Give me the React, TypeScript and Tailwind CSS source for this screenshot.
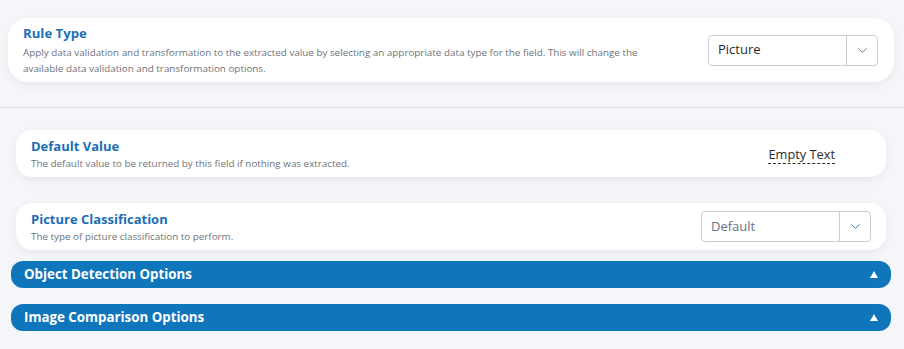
import { ChevronDown } from 'lucide-react';

const font = { fontFamily: '"Open Sans", "Noto Sans", sans-serif' };

function Select({ value, muted }: { value: string; muted?: boolean }) {
  return (
    <div className="flex h-[31px] w-[170px] items-stretch rounded-[4px] border border-[#c9ced6] bg-white">
      <div className={`flex flex-1 items-center pl-[9px] text-[13px] ${muted ? 'text-[#6b7280]' : 'text-[#2b2b2b]'}`}>
        {value}
      </div>
      <div className="flex w-[31px] items-center justify-center border-l border-[#c9ced6]">
        <ChevronDown size={15} strokeWidth={1.5} className={muted ? 'text-[#2f74bd]' : 'text-[#6b7280]'} />
      </div>
    </div>
  );
}

function Bar({ title }: { title: string }) {
  return (
    <div className="ml-[11px] mr-[13px] flex h-[27px] items-center justify-between rounded-[12px] bg-[#0f76bc] pl-[13px] pr-[13px]">
      <span className="text-[13.3px] font-bold text-white">{title}</span>
      <span className="h-0 w-0 border-x-[4px] border-b-[7px] border-x-transparent border-b-white" />
    </div>
  );
}

export default function App() {
  return (
    <div className="min-h-[349px] w-[904px] bg-[#f5f6fa] pt-[18px]" style={font}>
      {/* rule type */}
      <div className="ml-[8px] mr-[10px] flex h-[64px] items-center justify-between rounded-[20px] bg-white pl-[15px] pr-[16px] shadow-[0_3px_10px_rgba(0,0,0,0.06)]">
        <div className="pt-[1px]">
          <h2 className="text-[13.2px] leading-[17px] font-bold text-[#1c6fb5]">Rule Type</h2>
          <p className="mt-[2px] w-[630px] text-[9.85px] leading-[16px] text-[#6e737a]">
            Apply data validation and transformation to the extracted value by selecting an appropriate data type for the field. This will change the available data validation and transformation options.
          </p>
        </div>
        <Select value="Picture" />
      </div>

      <div className="mt-[25px] h-px w-full bg-[#dcdde1]" />

      <div className="ml-[16px] mr-[18px] mt-[22px] flex h-[47px] items-center justify-between rounded-[16px] bg-white pl-[15px] pr-[51px] shadow-[0_3px_10px_rgba(0,0,0,0.06)]">
        <div>
          <h3 className="text-[13px] leading-[17px] font-bold text-[#1c6fb5]">Default Value</h3>
          <p className="mt-[1px] text-[9.85px] leading-[14px] text-[#6e737a]">
            The default value to be returned by this field if nothing was extracted.
          </p>
        </div>
        <span className="mt-[3px] border-b border-dashed border-[#2b2b2b] text-[12.8px] leading-[17px] text-[#2b2b2b]">Empty Text</span>
      </div>

      <div className="ml-[16px] mr-[18px] mt-[26px] flex h-[47px] items-center justify-between rounded-[16px] bg-white pl-[15px] pr-[15px] shadow-[0_3px_10px_rgba(0,0,0,0.06)]">
        <div>
          <h3 className="text-[13px] leading-[17px] font-bold text-[#1c6fb5]">Picture Classification</h3>
          <p className="mt-[1px] text-[9.85px] leading-[14px] text-[#6e737a]">
            The type of picture classification to perform.
          </p>
        </div>
        <Select value="Default" muted />
      </div>

      {/* collapsible sections */}
      <div className="mt-[11px] flex flex-col gap-[16px] pb-[18px]">
        <Bar title="Object Detection Options" />
        <Bar title="Image Comparison Options" />
      </div>
    </div>
  );
}
